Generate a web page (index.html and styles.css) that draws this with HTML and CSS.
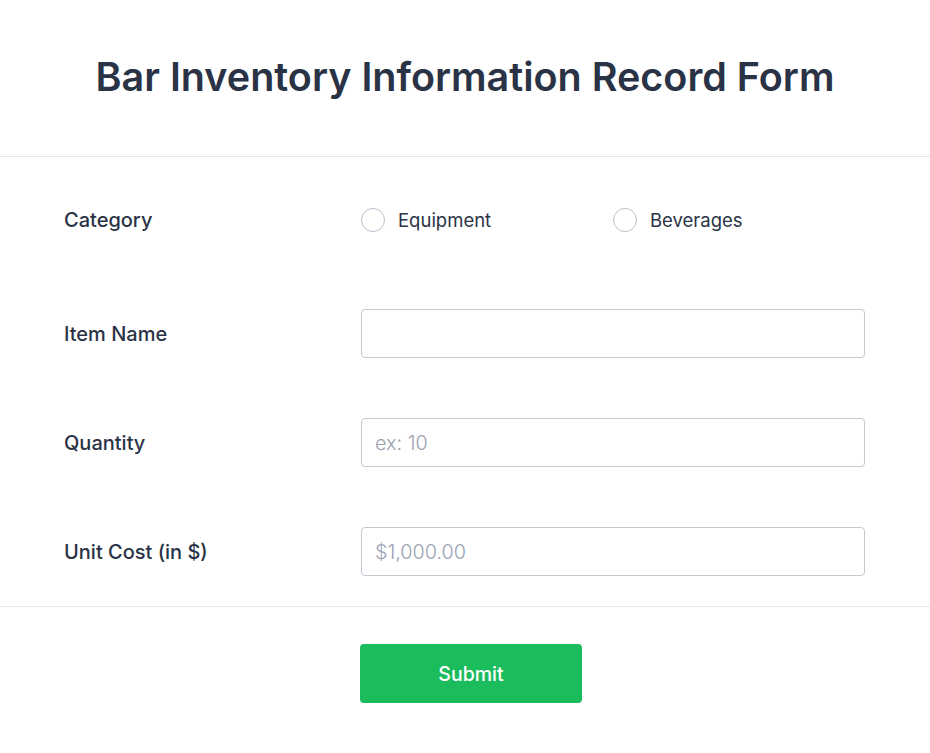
FILE: index.html
```html
<!DOCTYPE html>
<html lang="en">
<head>
<meta charset="utf-8">
<title>Bar Inventory Information Record Form</title>
<link rel="stylesheet" href="styles.css">
</head>
<body>
<form class="form">
  <header class="form-header">
    <h1 class="form-title">Bar Inventory Information Record Form</h1>
  </header>
  <div class="form-body">
    <div class="row row-radio">
      <span class="label">Category</span>
      <div class="radios">
        <label class="radio"><input type="radio" name="cat"><span class="circle"></span><span>Equipment</span></label>
        <label class="radio"><input type="radio" name="cat"><span class="circle"></span><span>Beverages</span></label>
      </div>
    </div>
    <div class="row">
      <label class="label" for="item">Item Name</label>
      <input class="field" id="item" type="text">
    </div>
    <div class="row">
      <label class="label" for="qty">Quantity</label>
      <input class="field" id="qty" type="text" placeholder="ex: 10">
    </div>
    <div class="row">
      <label class="label" for="cost">Unit Cost (in $)</label>
      <input class="field" id="cost" type="text" placeholder="$1,000.00">
    </div>
  </div>
  <footer class="form-footer">
    <button class="submit" type="submit">Submit</button>
  </footer>
</form>
</body>
</html>
```
FILE: styles.css
```css
* { box-sizing: border-box; }
html, body { margin: 0; padding: 0; background: #fff; }
body {
  font-family: Inter, "Noto Sans", sans-serif;
  color: #2a3346;
}
.form-header {
  height: 157px;
  border-bottom: 1px solid #e2e5ea;
  display: flex;
  align-items: center;
  justify-content: center;
  padding-bottom: 3px;
}
.form-title {
  margin: 0;
  font-size: 39.5px;
  font-weight: 600;
  color: #2a3346;
}
.form-body {
  padding: 0 65px 0 64px;
}
.row {
  display: grid;
  grid-template-columns: 297px 1fr;
  align-items: center;
  padding: 30px 0;
}
.row-radio {
  padding: 51px 0 47px;
}
.label {
  font-size: 20px;
  font-weight: 500;
  color: #2a3346;
}
.radios {
  display: flex;
}
.radio {
  display: flex;
  align-items: center;
  width: 252px;
  font-size: 18.5px;
  color: #2a3346;
  cursor: pointer;
}
.radio input { display: none; }
.circle {
  width: 24px;
  height: 24px;
  border: 1px solid #b9bfcb;
  border-radius: 50%;
  margin-right: 13px;
  flex: none;
}
.field {
  display: block;
  width: 100%;
  height: 49px;
  border: 1px solid #c3c8d2;
  border-radius: 4px;
  padding: 0 13px;
  font-family: Inter, "Noto Sans", sans-serif;
  font-size: 19.8px;
  font-weight: 300;
  color: #2a3346;
  background: #fff;
  outline: none;
}
.field::placeholder { color: #9aa2b2; }
.form-footer {
  border-top: 1px solid #ece9f4;
  padding-top: 37px;
  padding-left: 12px;
  display: flex;
  justify-content: center;
}
.submit {
  width: 222px;
  height: 59px;
  background: #1abc5c;
  border: none;
  border-radius: 4px;
  color: #fff;
  font-family: Inter, "Noto Sans", sans-serif;
  font-size: 19.5px;
  font-weight: 500;
  cursor: pointer;
}
```
